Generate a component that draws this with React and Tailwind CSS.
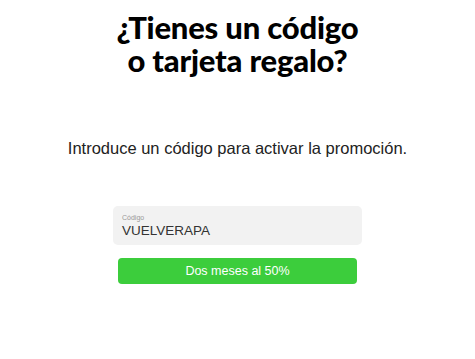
import React from "react";

export default function App() {
  return (
    <div className="w-[475px] h-[359px] bg-white flex flex-col items-center" style={{ fontFamily: '"Liberation Sans", Arial, sans-serif' }}>
      <h1
        className="mt-[11px] text-center text-[31px] leading-[33px] font-black text-black tracking-[-0.2px]"
        style={{ fontFamily: 'Lato, "Noto Sans", sans-serif' }}
      >
        ¿Tienes un código
        <br />o tarjeta regalo?
      </h1>
      <p className="mt-[61px] text-[16.5px] leading-[20px] text-[#222]">
        Introduce un código para activar la promoción.
      </p>
      <div className="mt-[48px] w-[249px] h-[39px] rounded-[5px] bg-[#f2f2f2] flex flex-col px-[9px] pt-[8px]">
        <span className="text-[7px] leading-[8px] text-[#999]">Código</span>
        <span className="text-[13.5px] leading-[16px] text-[#333] mt-[1px]">VUELVERAPA</span>
      </div>
      <button className="mt-[13px] w-[239px] h-[26px] rounded-[4px] bg-[#3ccd3c] text-white text-[12.5px] flex items-center justify-center">
        Dos meses al 50%
      </button>
    </div>
  );
}
